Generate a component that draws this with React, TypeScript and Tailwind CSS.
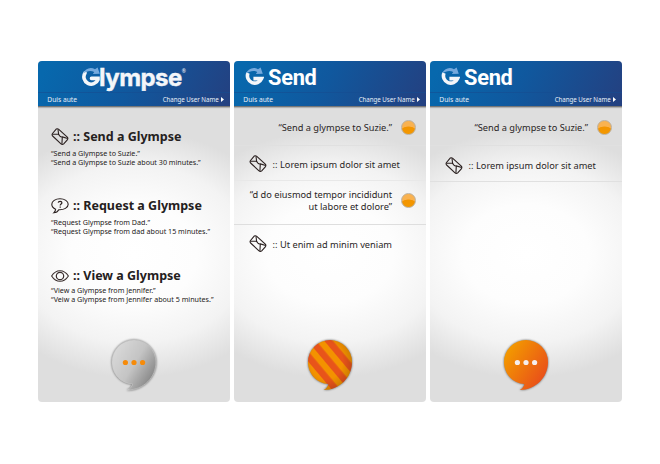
import type { ReactNode } from "react";

const MailIcon = () => (
  <svg viewBox="0 0 18 18" className="h-[18px] w-[18px] shrink-0" fill="none" stroke="#2b2120" strokeWidth="1.1" strokeLinejoin="round">
    <path d="M5.200 1.100Q6.600.4 7.800 1.400L16.300 9.200Q17.400 10.500 16.300 11.800L12.700 15.900Q11.400 17.100 10 15.900L1.600 8Q.6 6.800 1.500 5.500Z" />
    <path d="M7 1.200 7.600 6.200 1.300 6.300M7.600 6.200Q8.600 9.200 11.300 8.900L16.700 10.500M11.300 8.900 10.900 16.200" />
  </svg>
);

const QuestionIcon = () => (
  <svg viewBox="0 0 18 16" className="h-4 w-[18px] shrink-0" fill="none" stroke="#2b2120" strokeWidth="1.1">
    <path d="M9 .8C4.4.8.8 3.2.8 6.3c0 2.2 1.5 4 3.8 4.9 0 1.6-.8 2.6-1.8 3.6 2.3-.2 4-1.200 5-3.100 5.200.3 9.400-2 9.400-5.400C17.200 3.200 13.600.8 9 .8Z" />
    <path d="M7.200 4.600c.3-1.800 3.700-1.700 3.700.1C10.900 6 9.200 6 9.200 7.600M9.200 8.600v1.200" strokeWidth="1.200" />
  </svg>
);

const EyeIcon = () => (
  <svg viewBox="0 0 18 12" className="h-3 w-[18px] shrink-0" fill="none" stroke="#3b2f2e" strokeWidth="1.1">
    <path d="M.6 6Q4 .7 9 .7T17.400 6Q14 11.300 9 11.300T.6 6Z" />
    <circle cx="9" cy="6" r="3.700" strokeWidth="1.200" />
  </svg>
);

const GMark = ({ rounded = false }: { rounded?: boolean }) => (
  <svg viewBox="0 0 19 20" className="h-5 w-[19px] shrink-0" fill="none">
    <path
      d={rounded ? "M3 6A7.300 7.300 0 1 0 16 12.500V11.400H9.500" : "M3 6A7.300 7.300 0 1 0 16.600 11.600H8.400"}
      stroke="#f4f6f9" strokeWidth="3.600" strokeLinecap={rounded ? "round" : "butt"}
    />
    <path d="M1 6.500C3 1.800 8.500-.5 13 2.300L15.600.6 17.800 6.700 10.800 6.900 12.300 5C8.500 3.100 5.200 4 1 6.500Z" fill="#75a9dd" />
  </svg>
);

const BUBBLE = "M23 1A22 22 0 0 0 1 23C1 35 10 44.500 21.500 45C20.800 48 19 50 16.500 51C33 51 45 38 45 23A22 22 0 0 0 23 1Z";

type BubbleKind = "gray" | "striped" | "orange";

function Bubble({ kind }: { kind: BubbleKind }) {
  return (
    <svg viewBox="0 0 46 52" className="h-[52px] w-[46px] overflow-visible drop-shadow-[0_0_1.2px_rgba(0,0,0,0.6)]">
      <defs>
        <linearGradient id="gray" x1=".1" y1=".15" x2=".95" y2=".75">
          <stop stopColor="#d8d8d8" /><stop offset=".5" stopColor="#c4c4c4" /><stop offset="1" stopColor="#868686" />
        </linearGradient>
        <linearGradient id="orange" x1=".1" y1=".2" x2=".9" y2=".8">
          <stop stopColor="#f39800" /><stop offset="1" stopColor="#e94f1a" />
        </linearGradient>
        <pattern id="striped" width="12.800" height="12.800" patternUnits="userSpaceOnUse" patternTransform="translate(-1 0) rotate(-40)">
          <rect width="12.800" height="12.800" fill="#f39200" />
          <rect width="6.600" height="12.800" fill="#e8541a" />
        </pattern>
        <radialGradient id="shade" cx=".42" cy=".42" r=".6">
          <stop offset=".6" stopColor="#000" stopOpacity="0" /><stop offset="1" stopColor="#000" stopOpacity=".16" />
        </radialGradient>
      </defs>
      <path d={BUBBLE} fill={`url(#${kind})`} stroke={kind === "gray" ? "#cfcfcf" : "none"} strokeWidth=".6" />
      {kind === "striped" && <path d={BUBBLE} fill="url(#shade)" />}
      {kind !== "striped" && [14.400, 23, 31.600].map((x) => (
        <circle key={x} cx={x} cy="23.500" r="2.600" fill={kind === "gray" ? "#f68b0a" : "#f5eeee"} />
      ))}
    </svg>
  );
}

function Panel({ title, bubble, children }: { title: ReactNode; bubble: BubbleKind; children: ReactNode }) {
  return (
    <section className="flex h-[341px] w-[192px] shrink-0 flex-col overflow-hidden rounded-[4px] bg-[radial-gradient(158px_124px_at_50%_193px,#fff_0%,#fdfdfd_40%,#f3f3f3_72%,#dedede_100%)]">
      <header className="h-[46px] shrink-0 border-b border-[#777] bg-[linear-gradient(115deg,#0768ad_5%,#10589e_48%,#244080_100%)] text-white shadow-[0_1px_1px_rgba(0,0,0,0.2)]">
        <div className="h-8 border-b border-[#164c91]/60">{title}</div>
        <div className="flex h-[13px] items-center justify-between pr-[6px] pl-[9.700px] text-[6.700px] text-[#e7eff8]">
          <span className="pt-px leading-[12px]">Duis aute</span>
          <span className="flex items-center gap-[2px] text-[6.200px] tracking-[-0.040px]">
            Change User Name
            <svg viewBox="0 0 3 5" className="h-[5px] w-[3px]"><path d="M0 0 3 2.500 0 5Z" fill="#fff" /></svg>
          </span>
        </div>
      </header>
      <div className="h-[230px] shrink-0">{children}</div>
      <div className="flex justify-center pt-[2px]"><Bubble kind={bubble} /></div>
    </section>
  );
}

const SendTitle = () => (
  <div className="flex h-8 items-center pl-[11px]">
    <GMark />
    <span className="ml-[4.500px] pt-px font-[Roboto,sans-serif] text-[21.800px] leading-[31px] font-bold tracking-[-0.300px]">Send</span>
  </div>
);

const Orb = () => (
  <span className="h-[15px] w-[15px] shrink-0 rounded-full border border-[#bdb09c] bg-[radial-gradient(ellipse_9px_6.500px_at_50%_90%,#f39800_0%,#f39500_90%,#f9b250_100%)]" />
);

function Command({ icon, title, lines, box, gap }: { icon: ReactNode; title: string; lines: string[]; box: string; gap: string }) {
  return (
    <article className={`${box} pl-[13.400px] text-[#242020]`}>
      <div className="flex h-[19px] items-center gap-[4px]">
        {icon}
        <h2 className="text-[12.500px] leading-[19px] font-bold whitespace-nowrap">:: {title}</h2>
      </div>
      <div className={`${gap} text-[7.150px] leading-[9px] whitespace-nowrap`}>
        {lines.map((line) => <p key={line}>{line}</p>)}
      </div>
    </article>
  );
}

const Spoken = ({ children }: { children: ReactNode }) => (
  <div className="flex items-center justify-end gap-[8.500px] pr-[10px] text-right text-[9.220px] whitespace-nowrap text-[#292525]">
    <div className="leading-[11px]">{children}</div><Orb />
  </div>
);

const Reply = ({ children }: { children: ReactNode }) => (
  <div className="flex items-center gap-[6px] pl-[15px] text-[9.240px] whitespace-nowrap text-[#292525]">
    <MailIcon /><p className="leading-[13px]">:: {children}</p>
  </div>
);

export default function App() {
  return (
    <main className="flex h-[464px] w-[660px] gap-[4px] bg-white pt-[61px] pl-[37.600px] font-['Noto_Sans',sans-serif]">
      <Panel
        bubble="gray"
        title={
          <h1 className="flex h-8 items-center pl-[44px]">
            <GMark rounded />
            <span className="-ml-[1.500px] font-[Inter,sans-serif] text-[24px] leading-[31px] font-bold tracking-[-0.550px] text-[#f4f6f9] [-webkit-text-stroke:0.400px_#f4f6f9]">lympse</span>
            <span className="mb-3 text-[5px] leading-[7px]">®</span>
          </h1>
        }
      >
        <div className="pt-[20px]">
          <Command box="h-[69px]" gap="pt-[3px]" icon={<MailIcon />} title="Send a Glympse" lines={["“Send a Glympse to Suzie.”", "“Send a Glympse to Suzie about 30 minutes.”"]} />
          <Command box="h-[70px]" gap="pt-[2.500px]" icon={<QuestionIcon />} title="Request a Glympse" lines={["“Request Glympse from Dad.”", "“Request Glympse from dad about 15 minutes.”"]} />
          <Command box="h-[50px]" gap="pt-[1px]" icon={<EyeIcon />} title="View a Glympse" lines={["“View a Glympse from Jennifer.”", "“Veiw a Glympse from Jennifer about 5 minutes.”"]} />
        </div>
      </Panel>
      <Panel bubble="striped" title={<SendTitle />}>
        <div className="flex h-[39px] flex-col justify-center border-b border-[#e0e0e0] pt-[3px]"><Spoken>“Send a glympse to Suzie.”</Spoken></div>
        <div className="flex h-[35px] flex-col justify-center border-b border-[#e8e8e8] pt-[2px]"><Reply>Lorem ipsum dolor sit amet</Reply></div>
        <div className="flex h-[43.500px] flex-col justify-center border-b border-[#dedede] pb-[4px]">
          <Spoken><p className="pb-[0.500px]">“d do eiusmod tempor incididunt</p><p>ut labore et dolore”</p></Spoken>
        </div>
        <div className="pt-[10.500px]"><Reply>Ut enim ad minim veniam</Reply></div>
      </Panel>
      <Panel bubble="orange" title={<SendTitle />}>
        <div className="flex h-[39px] flex-col justify-center border-b border-[#e0e0e0] pt-[3px]"><Spoken>“Send a glympse to Suzie.”</Spoken></div>
        <div className="flex h-[36px] flex-col justify-center border-b border-[#e0e0e0] pt-[4px]"><Reply>Lorem ipsum dolor sit amet</Reply></div>
      </Panel>
    </main>
  );
}
